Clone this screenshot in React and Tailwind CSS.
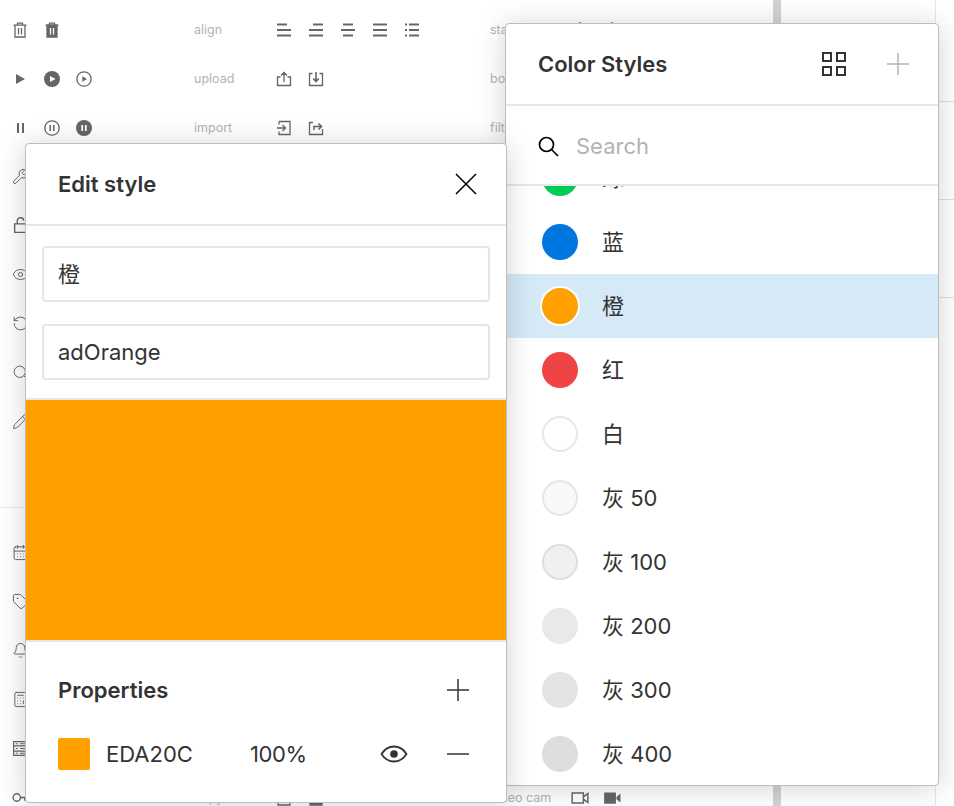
import React from 'react';
import { Wrench, Eye, RotateCcw, Search, Pencil, CalendarDays, Tag, Bell, Calculator } from 'lucide-react';

const Svg = ({ children, className = 'text-[#666]', size = 16 }) => (
    <svg width={size} height={size} viewBox="0 0 16 16" className={className} fill="none" stroke="currentColor" strokeWidth="1.3">
        {children}
    </svg>
);

const Bars = ({ d }) => <Svg><path d={d} strokeWidth="2" /></Svg>;

const TrashLine = () => (
    <Svg><path d="M1.5 3.2h13M5.5 3V1.2h5V3M3 3.2V15h10V3.2M6.5 6v6.5M9.5 6v6.5" /></Svg>
);
const TrashFill = () => (
    <Svg><path d="M1.5 3.2h13M5.5 3V1.2h5V3" /><path d="M3 3.2h10V15H3z" fill="currentColor" /><path d="M6.5 6v6.5M9.5 6v6.5" stroke="#fff" /></Svg>
);
const PlayFill = () => <Svg><path d="M4 3l9 5-9 5z" fill="currentColor" stroke="none" /></Svg>;
const PlayDisc = () => <Svg><circle cx="8" cy="8" r="8" fill="currentColor" stroke="none" /><path d="M6 5l5.5 3L6 11z" fill="#fff" stroke="none" /></Svg>;
const PlayRing = () => <Svg><circle cx="8" cy="8" r="7.2" /><path d="M6.3 5.3L11 8l-4.700 2.700z" fill="currentColor" stroke="none" /></Svg>;
const PauseBars = () => <Svg><path d="M5 3h2v10H5zM10 3h2v10h-2z" fill="currentColor" stroke="none" /></Svg>;
const PauseRing = () => <Svg><circle cx="8" cy="8" r="7.2" /><path d="M6.200 5v6M9.800 5v6" strokeWidth="1.500" /></Svg>;
const PauseDisc = () => <Svg><circle cx="8" cy="8" r="8" fill="currentColor" stroke="none" /><path d="M6.200 5v6M9.800 5v6" stroke="#fff" strokeWidth="1.800" /></Svg>;
const Upload = () => <Svg><path d="M4.500 6H1.500v8.500h13V6h-3M8 11V1.500M5 4.500l3-3 3 3" /></Svg>;
const Download = () => <Svg><path d="M4.500 2.500h-3v12h13v-12h-3" /><path d="M8 1v9M5.200 7.500L8 10.500l2.800-3" strokeWidth="1.600" /></Svg>;
const Import = () => <Svg><path d="M3 1.500h11v13H3v-3M3 4.500v-3M1 8h8M6.500 5l3 3-3 3" /></Svg>;
const Export = () => <Svg><path d="M5 2.500H1.500v12h13V9" /><path d="M6 10V6.500h7M10.500 3.500l3 3-3 3" strokeWidth="1.600" /></Svg>;
const Lock = () => <Svg size={17}><path d="M2.500 6.500h11v8h-11zM5 6.500V3.500a3 3 0 0 1 6 0" /></Svg>;
const Key = () => <Svg size={17}><circle cx="4.500" cy="8" r="3.500" /><path d="M8 8h7.500M12 8v3M14.500 8v2" /></Svg>;
const ListLines = () => (
    <Svg size={17}><path d="M1.500 1.500h13v13h-13zM1.500 5.500h13M1.500 10.500h13M3.500 3.500h2M3.500 8h2M3.500 12.500h2M7.500 3.500h5M7.500 8h5M7.500 12.500h5" strokeWidth="1.100" /></Svg>
);
const CamLine = () => <Svg size={18}><path d="M1 3.500h10v9H1zM11 7l4-3v8l-4-3" /></Svg>;
const CamFill = () => <Svg size={18}><path d="M1 3h10.500v10H1zM12 7l3.500-3v8L12 9z" fill="currentColor" stroke="none" /></Svg>;
const BoxLine = () => <Svg><path d="M2 1h12v14H2z" /></Svg>;
const BoxFill = () => <Svg><path d="M2 1h12v14H2z" fill="currentColor" /></Svg>;
const Star = ({ fill = 'none' }) => <Svg><path d="M8 .5l2 5.500h5l-4 3.500 1.500 5.500L8 12l-4.500 3L5 9.500 1 6h5z" fill={fill} /></Svg>;

const lu = { size: 17, strokeWidth: 1.4, className: 'text-[#666]' };

const Label = ({ children }) => (
    <div className="flex items-center pt-[2px] text-[#b3b3b3] text-[12.5px] leading-none whitespace-nowrap">{children}</div>
);

const Slot = ({ children }) => <div className="w-8 flex justify-center shrink-0">{children}</div>;

const Row = ({ left = [], label, mid = [], label2, right = [] }) => (
    <div className="h-[49px] flex items-center">
        <div className="w-[194px] flex pl-1 shrink-0">
            {left.map((ic, i) => <Slot key={i}>{ic}</Slot>)}
        </div>
        <div className="w-[74px] shrink-0"><Label>{label}</Label></div>
        <div className="w-[222px] flex shrink-0">
            {mid.map((ic, i) => <Slot key={i}>{ic}</Slot>)}
        </div>
        <div className="w-[74px] shrink-0"><Label>{label2}</Label></div>
        <div className="flex">
            {right.map((ic, i) => <Slot key={i}>{ic}</Slot>)}
        </div>
    </div>
);

const swatches = [
    { name: '绿', cls: 'bg-[#00cc55]' },
    { name: '蓝', cls: 'bg-[#0077e0]' },
    { name: '橙', cls: 'bg-[#ffa000] ring-2 ring-white', active: true },
    { name: '红', cls: 'bg-[#f04444]' },
    { name: '白', cls: 'bg-white border-2 border-[#e8e8e8]' },
    { name: '灰 50', cls: 'bg-[#f8f8f8] border-2 border-[#e6e6e6]' },
    { name: '灰 100', cls: 'bg-[#f0f0f0] border-2 border-[#dedede]' },
    { name: '灰 200', cls: 'bg-[#e9e9e9]' },
    { name: '灰 300', cls: 'bg-[#e4e4e4]' },
    { name: '灰 400', cls: 'bg-[#dedede]' },
];

const Background = () => (
    <div className="h-[806px] overflow-hidden flex">
        <div className="w-[773px] shrink-0">
            <div className="pt-[5px]">
                <Row
                    left={[<TrashLine />, <TrashFill />]}
                    label="align"
                    mid={[
                        <Bars d="M1 2.500h10M1 8h14M1 13.500h14" />,
                        <Bars d="M5 2.500h10M1 8h14M1 13.500h14" />,
                        <Bars d="M3 2.500h10M1 8h14M3 13.500h10" />,
                        <Bars d="M1 2.500h14M1 8h14M1 13.500h14" />,
                        <Bars d="M1 2.500h2M1 8h2M1 13.500h2M5 2.500h10M5 8h10M5 13.500h10" />,
                    ]}
                    label2="star"
                    right={[<Star />, <Star fill="currentColor" />]}
                />
                <Row left={[<PlayFill />, <PlayDisc />, <PlayRing />]} label="upload" mid={[<Upload />, <Download />]} label2="book" />
                <Row left={[<PauseBars />, <PauseRing />, <PauseDisc />]} label="import" mid={[<Import />, <Export />]} label2="filter" />
                <Row left={[<Wrench {...lu} />]} />
                <Row left={[<Lock />]} />
                <Row left={[<Eye {...lu} />]} />
                <Row left={[<RotateCcw {...lu} />]} />
                <Row left={[<Search {...lu} />]} />
                <Row left={[<Pencil {...lu} />]} />
            </div>
            <div className="mt-[61px] mb-[20px] border-t border-[#e6e6e6]" />
            <Row left={[<CalendarDays {...lu} />]} />
            <Row left={[<Tag {...lu} />]} />
            <Row left={[<Bell {...lu} />]} />
            <Row left={[<Calculator {...lu} />]} />
            <Row left={[<ListLines />]} />
            <Row
                left={[<Key />]}
                label="copy"
                mid={[<BoxLine />, <BoxFill />]}
                label2="video cam"
                right={[<CamLine />, <CamFill />]}
            />
        </div>
        <div className="w-2 shrink-0 bg-[#d2d2d2]" />
        <div className="w-[155px] shrink-0 border-r border-[#e6e6e6]" />
        <div className="flex-1 pt-[4px]">
            <div className="h-[98px] border-b border-[#e0e0e0]" />
            <div className="h-[98px] border-b border-[#e0e0e0]" />
            <div className="h-[98px] border-b border-[#e0e0e0]" />
        </div>
    </div>
);

const ColorStyles = () => (
    <div className="absolute left-[505px] top-[23px] w-[434px] h-[763px] bg-white border border-[#bdbdbd] rounded-[4px] shadow-[0_2px_28px_rgba(0,0,0,0.18)] flex flex-col overflow-hidden">
        <div className="h-[82px] shrink-0 flex items-center pl-[32px] pr-[28px] border-b-2 border-[#e6e6e6]">
            <h2 className="flex-1 text-[22px] font-semibold text-[#333]">Color Styles</h2>
            <svg width="26" height="26" viewBox="0 0 26 26" fill="none" stroke="#333" strokeWidth="2" className="mr-[39px]">
                <path d="M2 2h8v8H2zM16 2h8v8h-8zM2 16h8v8H2zM16 16h8v8h-8z" />
            </svg>
            <svg width="24" height="24" viewBox="0 0 24 24" fill="none" stroke="#b3b3b3" strokeWidth="1.500">
                <path d="M1 12h22M12 1v22" />
            </svg>
        </div>
        <div className="h-[80px] shrink-0 flex items-center pt-[2px] pl-[32px] border-b-2 border-[#e6e6e6]">
            <svg width="21" height="21" viewBox="0 0 21 21" fill="none" stroke="#000" strokeWidth="1.700" className="mr-[17px]">
                <circle cx="8.500" cy="8.500" r="7" /><path d="M13.500 13.500L20 20" />
            </svg>
            <span className="text-[22px] text-[#b3b3b3]">Search</span>
        </div>
        <div className="flex-1 overflow-hidden">
            <div className="-mt-[40px]">
                {swatches.map((s) => (
                    <div key={s.name} className={`h-[64px] flex items-center pl-[36px] ${s.active ? 'bg-[#d5e9f7]' : ''}`}>
                        <div className={`w-9 h-9 rounded-full shrink-0 ${s.cls}`} />
                        <span className="ml-[24px] text-[22px] text-[#333]">{s.name}</span>
                    </div>
                ))}
            </div>
        </div>
    </div>
);

const EditStyle = () => (
    <div className="absolute left-[25px] top-[143px] w-[482px] h-[660px] bg-white border border-[#bdbdbd] rounded-[4px] shadow-[0_2px_28px_rgba(0,0,0,0.18)] flex flex-col overflow-hidden">
        <div className="h-[82px] shrink-0 flex items-center justify-between pl-[32px] pr-[28px] border-b-2 border-[#e6e6e6]">
            <h2 className="text-[22px] font-semibold text-[#333]">Edit style</h2>
            <svg width="24" height="24" viewBox="0 0 24 24" fill="none" stroke="#000" strokeWidth="1.500">
                <path d="M2 2l20 20M22 2L2 22" />
            </svg>
        </div>
        <div className="px-4 pt-[20px] pb-[18px] flex flex-col gap-[22px]">
            <div className="h-[56px] border-2 border-[#e6e6e6] rounded-[4px] flex items-center px-[14px] text-[22px] text-[#333]">橙</div>
            <div className="h-[56px] border-2 border-[#e6e6e6] rounded-[4px] flex items-center px-[14px] text-[22px] text-[#333]">adOrange</div>
        </div>
        <div className="h-[244px] shrink-0 bg-[#ffa000] border-y-2 border-[#e6e6e6]" />
        <div className="flex-1 px-[32px]">
            <div className="h-[96px] flex items-center justify-between pr-[4px]">
                <h3 className="text-[22px] font-semibold text-[#333]">Properties</h3>
                <svg width="24" height="24" viewBox="0 0 24 24" fill="none" stroke="#333" strokeWidth="1.500">
                    <path d="M1 12h22M12 1v22" />
                </svg>
            </div>
            <div className="h-8 flex items-center pr-[4px]">
                <div className="w-8 h-8 bg-[#ffa000] rounded-[2px] shrink-0" />
                <span className="ml-4 w-[144px] text-[22px] text-[#333]">EDA20C</span>
                <span className="flex-1 text-[22px] tracking-[-0.4px] text-[#333]">100%</span>
                <svg width="28" height="20" viewBox="0 0 28 20" fill="none" stroke="#333" strokeWidth="1.800" className="mr-[38px]">
                    <path d="M1.500 10C5 4.500 9 2.500 14 2.500S23 4.500 26.500 10C23 15.500 19 17.500 14 17.500S5 15.500 1.500 10z" />
                    <circle cx="14" cy="10" r="3.800" fill="#333" stroke="none" />
                </svg>
                <svg width="24" height="24" viewBox="0 0 24 24" fill="none" stroke="#333" strokeWidth="1.500">
                    <path d="M1 12h22" />
                </svg>
            </div>
        </div>
    </div>
);

export default function App() {
    return (
        <div className="relative w-[954px] h-[806px] overflow-hidden bg-white font-['Inter','Noto_Sans_CJK_SC',sans-serif]">
            <Background />
            <ColorStyles />
            <EditStyle />
        </div>
    );
}
